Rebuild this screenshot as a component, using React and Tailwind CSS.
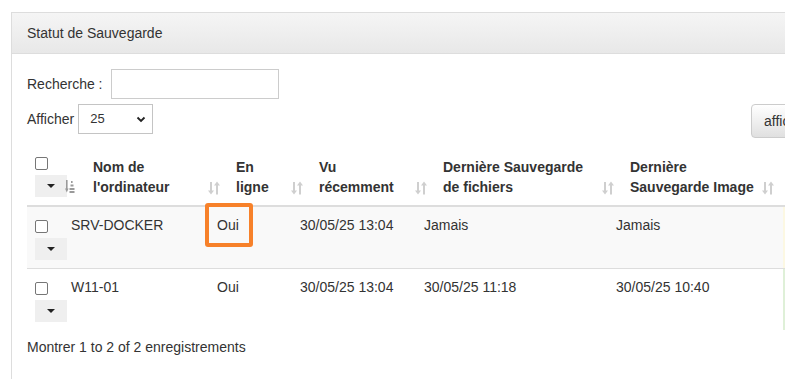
import React from "react";

function SortIcon() {
  return (
    <svg width="12" height="14" viewBox="0 0 12 14" className="absolute right-[8px] bottom-[10px]">
      <g fill="#cfcfcf">
        <rect x="2" y="1" width="2" height="9" />
        <path d="M0 9.5 L6 9.5 L3 13.5 Z" />
        <rect x="8" y="4" width="2" height="9.5" />
        <path d="M6 4.5 L12 4.5 L9 0.5 Z" />
      </g>
    </svg>
  );
}

function SortAscIcon() {
  return (
    <svg width="10" height="13" viewBox="0 0 10 13" className="absolute right-[10px] bottom-[12px]">
      <g fill="#9a9a9a">
        <rect x="1" y="0" width="1.6" height="9" />
        <path d="M0 8.5 L3.6 8.5 L1.8 12.5 Z" />
        <rect x="6" y="1" width="1.6" height="2" />
        <rect x="5.5" y="4.5" width="3" height="2" />
        <rect x="4.5" y="8" width="5" height="2" />
        <rect x="4.5" y="11" width="5" height="2" />
      </g>
    </svg>
  );
}

function Checkbox() {
  return <div className="w-[13px] h-[13px] border border-[#767676] rounded-[2px] bg-white" />;
}

function DropBtn() {
  return (
    <div className="w-[32px] h-[22px] bg-[#efefef] flex items-center justify-center">
      <div className="w-0 h-0 border-l-[4px] border-r-[4px] border-t-[4px] border-l-transparent border-r-transparent border-t-[#222]" />
    </div>
  );
}

function HeadCell({ children }) {
  return (
    <div className="relative pt-[8px] pb-[8px] pl-[8px] pr-[30px] font-bold whitespace-nowrap">
      {children}
      <SortIcon />
    </div>
  );
}

function Row({ name, online, seen, files, image, bg, edge, highlight, top }) {
  return (
    <div className={`grid grid-cols-[36px_146px_83px_124px_192px_175px_60px] ${bg} ${top ? "border-t border-[#ddd]" : ""}`}>
      <div className="pt-[8px] pb-[8px] pl-[8px]">
        <div className="pt-[5px]">
          <Checkbox />
        </div>
        <div className="mt-[5px]">
          <DropBtn />
        </div>
      </div>
      <div className="pt-[8px] px-[8px] whitespace-nowrap">{name}</div>
      <div className="pt-[8px] px-[8px] whitespace-nowrap relative">
        {online}
        {highlight && (
          <div className="absolute left-[-4px] top-[-4px] w-[48px] h-[44px] border-[4px] border-[#f7812a] rounded-[3px]" />
        )}
      </div>
      <div className="pt-[8px] px-[8px] whitespace-nowrap">{seen}</div>
      <div className="pt-[8px] px-[8px] whitespace-nowrap">{files}</div>
      <div className="pt-[8px] px-[8px] whitespace-nowrap">{image}</div>
      <div className={edge} />
    </div>
  );
}

export default function App() {
  return (
    <div className="w-[785px] h-[379px] overflow-hidden bg-white font-['Liberation_Sans',Arial,sans-serif] text-[14px] leading-[20px] text-[#333]">
      <div className="pt-[12px] pl-[11px]">
        <div className="w-[900px] h-[400px] border-l border-t border-[#ddd]">
          <div className="h-[41px] border-b border-[#ddd] bg-gradient-to-b from-[#f5f5f5] to-[#e8e8e8] pl-[15px] flex items-center">
            Statut de Sauvegarde
          </div>
          <div className="pl-[15px] pt-[15px]">
            <div className="flex items-center h-[30px]">
              <span>Recherche :</span>
              <div className="ml-[9px] w-[168px] h-[30px] border border-[#ccc] bg-white" />
            </div>
            <div className="mt-[5px] w-[874px] flex justify-between items-start">
              <div className="flex items-center h-[30px]">
                <span>Afficher</span>
                <div className="ml-[4px] w-[75px] h-[30px] border border-[#c4c4c4] bg-white flex items-center justify-between pl-[11px] pr-[6px] text-[13px]">
                  <span>25</span>
                  <svg width="10" height="7" viewBox="0 0 10 7">
                    <path d="M1.5 1.5 L5 5 L8.5 1.5" fill="none" stroke="#222" strokeWidth="1.8" />
                  </svg>
                </div>
              </div>
              <div className="w-[150px] h-[34px] border border-[#ccc] rounded-[4px] bg-gradient-to-b from-white to-[#e0e0e0] px-[12px] py-[6px] whitespace-nowrap">
                afficher colonnes
              </div>
            </div>

            <div className="mt-[11px] w-[800px]">
              <div className="grid grid-cols-[58px_143px_83px_124px_187px_205px] border-b-2 border-[#ddd]">
                <div className="relative pb-[8px] pt-[8px] pl-[8px]">
                  <Checkbox />
                  <div className="mt-[5px]">
                    <DropBtn />
                  </div>
                  <SortAscIcon />
                </div>
                <HeadCell>
                  Nom de
                  <br />
                  l'ordinateur
                </HeadCell>
                <HeadCell>
                  En
                  <br />
                  ligne
                </HeadCell>
                <HeadCell>
                  Vu
                  <br />
                  récemment
                </HeadCell>
                <HeadCell>
                  Dernière Sauvegarde
                  <br />
                  de fichiers
                </HeadCell>
                <div className="relative pt-[8px] pb-[8px] pl-[8px] font-bold whitespace-nowrap">
                  Dernière
                  <br />
                  Sauvegarde Image
                  <svg width="12" height="14" viewBox="0 0 12 14" className="absolute left-[140px] bottom-[10px]">
                    <g fill="#cfcfcf">
                      <rect x="2" y="1" width="2" height="9" />
                      <path d="M0 9.5 L6 9.5 L3 13.5 Z" />
                      <rect x="8" y="4" width="2" height="9.5" />
                      <path d="M6 4.5 L12 4.5 L9 0.5 Z" />
                    </g>
                  </svg>
                </div>
              </div>
              <Row
                name="SRV-DOCKER"
                online="Oui"
                seen="30/05/25 13:04"
                files="Jamais"
                image="Jamais"
                bg="bg-[#f9f9f9]"
                edge="bg-[#fcf8e3]"
                highlight
              />
              <Row
                name="W11-01"
                online="Oui"
                seen="30/05/25 13:04"
                files="30/05/25 11:18"
                image="30/05/25 10:40"
                bg="bg-white"
                edge="bg-[#dff0d8]"
                top
              />
            </div>
            <div className="mt-[7px]">Montrer 1 to 2 of 2 enregistrements</div>
          </div>
        </div>
      </div>
    </div>
  );
}
